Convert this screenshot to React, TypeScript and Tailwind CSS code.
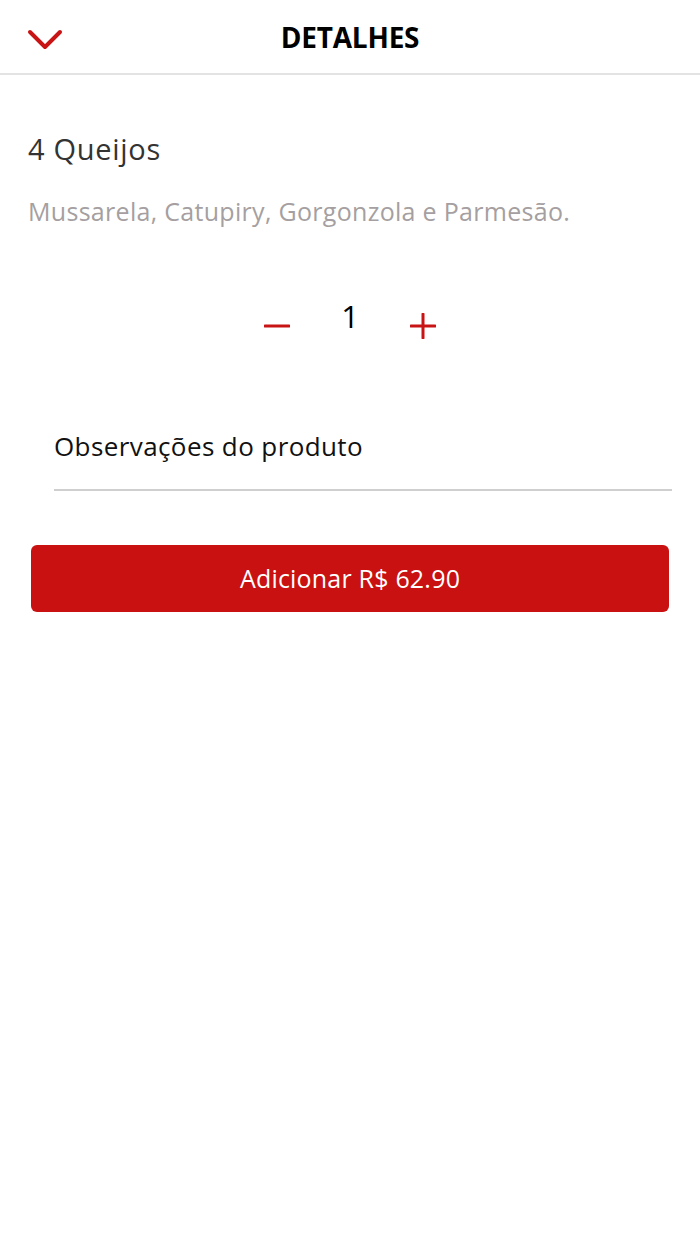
import React, { useState } from 'react';

// Tela de detalhes do produto
export default function App() {
  const [qtd, setQtd] = useState(1);
  const [obs, setObs] = useState('');
  const preco = 62.9;

  return (
    <div className="w-[700px] min-h-[1244px] bg-white font-['Open_Sans','Noto_Sans',sans-serif]">
      {/* Header */}
      <div className="h-[75px] flex items-center relative border-b-2 border-[#e3e3e3]">
        <button className="absolute left-[27px] top-[28px] w-[36px] h-[22px] flex items-center justify-center">
          <svg width="36" height="22" viewBox="0 0 36 22" fill="none">
            <path d="M3 4 L18 19 L33 4" stroke="#c81414" strokeWidth="4" strokeLinecap="round" strokeLinejoin="round" />
          </svg>
        </button>
        <h1 className="w-full text-center text-[28px] font-bold text-black tracking-[-0.2px]">DETALHES</h1>
      </div>

      <div className="px-[28px] pt-[52px]">
        <h2 className="text-[29px] text-[#333] leading-[44px] tracking-[0.7px]">4 Queijos</h2>
        <p className="mt-[23px] text-[25px] text-[#a59fa1] leading-[34px] tracking-[0.3px]">Mussarela, Catupiry, Gorgonzola e Parmesão.</p>
      </div>

      {/* Quantidade */}
      <div className="mt-[58px] flex items-center justify-center gap-[43px]">
        <button onClick={() => setQtd(Math.max(1, qtd - 1))} className="w-[40px] h-[40px] flex items-center justify-center mt-[20px]">
          <svg width="26" height="26" viewBox="0 0 26 26">
            <path d="M1 13 H25" stroke="#c81414" strokeWidth="3" strokeLinecap="round" />
          </svg>
        </button>
        <span className="text-[31px] text-black leading-[40px] w-[20px] text-center">{qtd}</span>
        <button onClick={() => setQtd(qtd + 1)} className="w-[40px] h-[40px] flex items-center justify-center mt-[20px]">
          <svg width="26" height="26" viewBox="0 0 26 26">
            <path d="M1 13 H25 M13 1 V25" stroke="#c81414" strokeWidth="3" strokeLinecap="round" />
          </svg>
        </button>
      </div>

      {/* Observações */}
      <div className="ml-[54px] mr-[28px] mt-[75px] border-b-2 border-[#cfcfcf]">
        <input
          value={obs}
          onChange={(e) => setObs(e.target.value)}
          placeholder="Observações do produto"
          className="w-full h-[68px] pb-[18px] text-[26px] text-[#111] placeholder:text-[#111] outline-none bg-transparent tracking-[0.4px]"
        />
      </div>

      <div className="px-[31px] mt-[54px]">
        <button className="w-full h-[67px] rounded-[6px] bg-[#c91111] text-white text-[25px] tracking-[0.2px]">
          Adicionar R$ {(preco * qtd).toFixed(2)}
        </button>
      </div>
    </div>
  );
}
